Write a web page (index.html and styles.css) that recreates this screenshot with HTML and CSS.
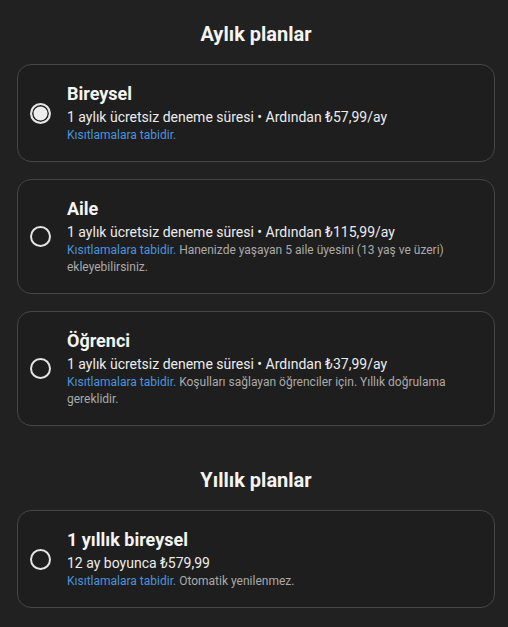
FILE: index.html
```html
<!DOCTYPE html>
<html lang="tr">
<head>
<meta charset="utf-8">
<link rel="stylesheet" href="styles.css">
</head>
<body>
<main class="page">
  <section class="section">
    <h2 class="section-title">Aylık planlar</h2>
    <div class="plans">
      <div class="plan">
        <span class="radio radio-on"></span>
        <div class="plan-body">
          <div class="plan-name">Bireysel</div>
          <div class="plan-price">1 aylık ücretsiz deneme süresi • Ardından ₺57,99/ay</div>
          <div class="plan-note"><span class="link">Kısıtlamalara tabidir.</span></div>
        </div>
      </div>
      <div class="plan">
        <span class="radio"></span>
        <div class="plan-body">
          <div class="plan-name">Aile</div>
          <div class="plan-price">1 aylık ücretsiz deneme süresi • Ardından ₺115,99/ay</div>
          <div class="plan-note"><span class="link">Kısıtlamalara tabidir.</span> Hanenizde yaşayan 5 aile üyesini (13 yaş ve üzeri) ekleyebilirsiniz.</div>
        </div>
      </div>
      <div class="plan">
        <span class="radio"></span>
        <div class="plan-body">
          <div class="plan-name">Öğrenci</div>
          <div class="plan-price">1 aylık ücretsiz deneme süresi • Ardından ₺37,99/ay</div>
          <div class="plan-note"><span class="link">Kısıtlamalara tabidir.</span> Koşulları sağlayan öğrenciler için. Yıllık doğrulama gereklidir.</div>
        </div>
      </div>
    </div>
  </section>
  <section class="section section-second">
    <h2 class="section-title">Yıllık planlar</h2>
    <div class="plans">
      <div class="plan">
        <span class="radio"></span>
        <div class="plan-body">
          <div class="plan-name">1 yıllık bireysel</div>
          <div class="plan-price">12 ay boyunca ₺579,99</div>
          <div class="plan-note"><span class="link">Kısıtlamalara tabidir.</span> Otomatik yenilenmez.</div>
        </div>
      </div>
    </div>
  </section>
</main>
</body>
</html>
```

FILE: styles.css
```css
html, body {
  margin: 0;
  padding: 0;
  background: #212121;
}
body {
  font-family: Roboto, "Liberation Sans", Arial, sans-serif;
  color: #f1f1f1;
}
.page {
  padding: 22px 13px 20px 17px;
}
.section-second {
  margin-top: 42px;
}
.section-title {
  margin: 0 0 18px;
  font-size: 20px;
  line-height: 24px;
  font-weight: 700;
  text-align: center;
  color: #f4f4f4;
}
.plans {
  display: flex;
  flex-direction: column;
  gap: 17px;
}
.plan {
  display: flex;
  align-items: center;
  gap: 16px;
  border: 1px solid #464646;
  border-radius: 14px;
  background: #1e1e1e;
  padding: 17px 16px 17px 12px;
}
.radio {
  flex: none;
  width: 21px;
  height: 21px;
  box-sizing: border-box;
  border: 2px solid #e4e4e4;
  border-radius: 50%;
}
.radio-on {
  background: #ececec;
  box-shadow: inset 0 0 0 1.5px #1e1e1e;
}
.plan-body {
  flex: 1;
  min-width: 0;
}
.plan-name {
  font-size: 18px;
  line-height: 24px;
  font-weight: 700;
  color: #f4f4f4;
}
.plan-price {
  margin-top: 1px;
  font-size: 14px;
  line-height: 20px;
  color: #ececec;
}
.plan-note {
  font-size: 12px;
  line-height: 17px;
  color: #aaaaaa;
}
.link {
  color: #4a94dd;
}
```
